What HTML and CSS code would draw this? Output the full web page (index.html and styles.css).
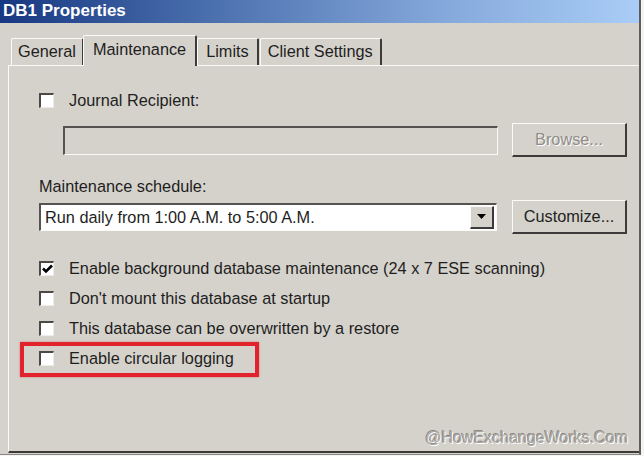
FILE: index.html
```html
<!DOCTYPE html>
<html lang="en">
<head>
    <meta charset="UTF-8">
    <title>DB1 Properties</title>
    <link rel="stylesheet" href="styles.css">
</head>
<body>
    <div class="window">
        <div class="titlebar">DB1 Properties</div>

        <div class="tabs">
            <div class="tab">General</div>
            <div class="tab tab-active">Maintenance</div>
            <div class="tab tab-limits">Limits</div>
            <div class="tab">Client Settings</div>
        </div>

        <div class="panel">
            <div class="row check-row journal-row">
                <span class="checkbox"></span>
                <span class="label">Journal Recipient:</span>
            </div>

            <div class="row field-row">
                <div class="textbox"></div>
                <div class="button disabled">Browse...</div>
            </div>

            <div class="row caption">Maintenance schedule:</div>

            <div class="row field-row select-row">
                <div class="select">
                    <span class="select-text">Run daily from 1:00 A.M. to 5:00 A.M.</span>
                    <span class="select-arrow">
                        <svg width="9" height="5" viewBox="0 0 9 5"><path d="M0 0h9L4.5 5z" fill="#000"/></svg>
                    </span>
                </div>
                <div class="button">Customize...</div>
            </div>

            <div class="options">
                <div class="row check-row">
                    <span class="checkbox">
                        <svg width="11" height="10" viewBox="0 0 11 10"><path d="M1 4.5l3 3L10 1.5" fill="none" stroke="#000" stroke-width="2.6"/></svg>
                    </span>
                    <span class="label">Enable background database maintenance (24 x 7 ESE scanning)</span>
                </div>
                <div class="row check-row">
                    <span class="checkbox"></span>
                    <span class="label">Don't mount this database at startup</span>
                </div>
                <div class="row check-row">
                    <span class="checkbox"></span>
                    <span class="label">This database can be overwritten by a restore</span>
                </div>
                <div class="row check-row highlighted">
                    <span class="checkbox"></span>
                    <span class="label">Enable circular logging</span>
                    <span class="highlight-box"></span>
                </div>
            </div>

            <div class="watermark">@HowExchangeWorks.Com</div>
        </div>
    </div>
</body>
</html>
```

FILE: styles.css
```css
:root {
    --face: #d5d2cc;
    --shadow: #7e7c78;
    --dark: #3c3b39;
    --light: #fbfaf7;
    --text: #1e1e1e;
}

* {
    box-sizing: border-box;
    margin: 0;
    padding: 0;
}

body {
    font-family: 'Liberation Sans', Arial, sans-serif;
    font-size: 16.3px;
    color: var(--text);
    background: #f4f4f2;
    width: 644px;
    height: 456px;
    overflow: hidden;
}

.window {
    width: 641px;
    height: 455px;
    background-color: var(--face);
    border-right: 2px solid #5e5d5a;
    border-bottom: 1px solid #8a8884;
    display: flex;
    flex-direction: column;
}

.titlebar {
    height: 23px;
    padding-left: 3px;
    line-height: 22px;
    font-size: 17px;
    font-weight: bold;
    color: #fff;
    background: linear-gradient(90deg, #173882 0%, #4e73b0 35%, #86a9dc 70%, #a9cdf6 100%);
}

.tabs {
    display: flex;
    align-items: flex-end;
    height: 42px;
    padding-left: 11px;
}

.tab {
    height: 27px;
    padding: 0 6px;
    line-height: 25px;
    border-top: 1px solid var(--light);
    border-left: 1px solid var(--light);
    border-right: 2px solid var(--dark);
    border-radius: 2px 2px 0 0;
    margin-right: 1px;
}

.tab:last-child {
    padding: 0 7px;
}

.tab-limits {
    padding: 0 8px;
}

.tab-active {
    height: 31px;
    line-height: 27px;
    padding: 0 9px;
    margin: 0 0 -1px -2px;
    background-color: var(--face);
    position: relative;
    z-index: 1;
}

.panel {
    position: relative;
    flex: 1;
    margin: 0 0 1px 8px;
    padding: 24px 0 0 30px;
    border-top: 1px solid var(--light);
    border-left: 1px solid var(--light);
    border-bottom: 2px solid var(--dark);
    display: flex;
    flex-direction: column;
}

.row {
    display: flex;
    align-items: center;
}

.check-row {
    height: 20px;
    gap: 15px;
}

.checkbox {
    flex: none;
    width: 15px;
    height: 15px;
    background: #fff;
    border-top: 2px solid #4a4946;
    border-left: 2px solid #4a4946;
    border-right: 1px solid #ecebe8;
    border-bottom: 1px solid #ecebe8;
    display: flex;
    align-items: center;
    justify-content: center;
}

.field-row {
    margin-top: 13px;
    height: 34px;
    justify-content: space-between;
    padding-right: 12px;
}

.textbox {
    margin-left: 24px;
    width: 435px;
    height: 29px;
    border-top: 2px solid #555350;
    border-left: 2px solid #555350;
    border-right: 1px solid var(--light);
    border-bottom: 1px solid var(--light);
}

.button {
    width: 115px;
    height: 34px;
    line-height: 30px;
    text-align: center;
    border-top: 1px solid var(--light);
    border-left: 1px solid var(--light);
    border-right: 2px solid var(--dark);
    border-bottom: 2px solid var(--dark);
}

.button.disabled {
    color: #8e8c88;
    text-shadow: 1px 1px 0 #fff;
}

.caption {
    margin-top: 19px;
    height: 20px;
}

.select-row {
    margin-top: 4px;
    height: 33px;
}

.select {
    width: 458px;
    height: 28px;
    background: #fff;
    border-top: 2px solid #555350;
    border-left: 2px solid #555350;
    border-right: 1px solid var(--light);
    border-bottom: 1px solid var(--light);
    display: flex;
    align-items: center;
    justify-content: space-between;
    padding: 1px 2px 1px 4px;
}

.select-arrow {
    width: 24px;
    height: 23px;
    background-color: var(--face);
    border-top: 1px solid var(--light);
    border-left: 1px solid var(--light);
    border-right: 2px solid var(--dark);
    border-bottom: 2px solid var(--dark);
    display: flex;
    align-items: center;
    justify-content: center;
}

.options {
    margin-top: 25px;
    display: flex;
    flex-direction: column;
    gap: 10px;
}

.highlighted {
    position: relative;
}

.highlight-box {
    position: absolute;
    left: -19px;
    top: -6px;
    width: 239px;
    height: 35px;
    border: 4px solid #e0232c;
    box-shadow: 0 0 2px rgba(224, 35, 44, 0.5);
}

.watermark {
    position: absolute;
    right: 11px;
    bottom: 4px;
    font-size: 16px;
    color: #a9a7a3;
    text-shadow: 1px 1px 0 #fff, -1px -1px 0 #8c8a86;
}
```
